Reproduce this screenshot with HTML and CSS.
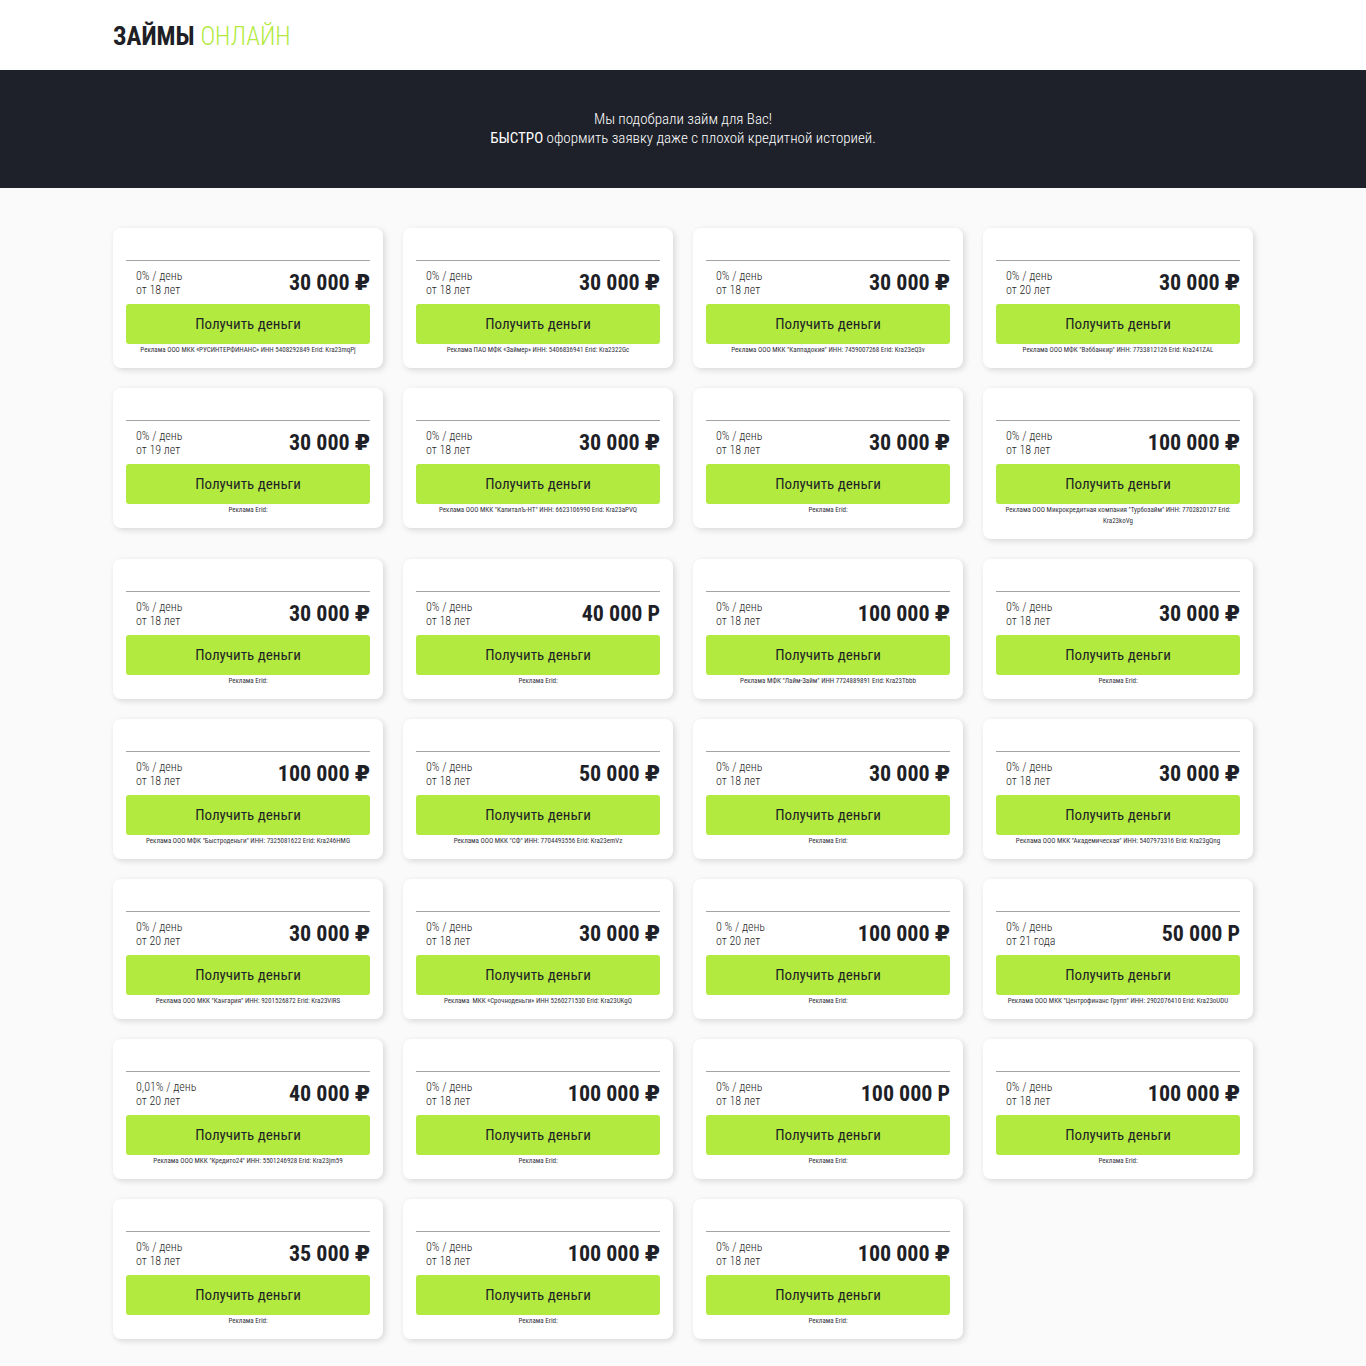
FILE: index.html
```html
<!DOCTYPE html>
<html lang="ru">
	<head>
		<meta charset="utf-8">
		<meta name="viewport" content="width=device-width, initial-scale=1.0">
		<title>Займы онлайн</title>
		<link rel="stylesheet" href="styles.css">
	</head>
	<body>
		<header class="header">
			<div class="container">
				<a href="/" class="logo"><b>ЗАЙМЫ</b> <span>ОНЛАЙН</span></a>
			</div>
		</header>
		<section class="banner">
			<p>Мы подобрали займ для Вас!<br><b>БЫСТРО</b> оформить заявку даже с плохой кредитной историей.</p>
		</section>
		<main class="container offers">
			<div class="card">
				<div class="card-logo"></div>
				<div class="card-info"><p>0% / день<br>от 18 лет</p><strong>30 000 <i>₽</i></strong></div>
				<a href="#" class="card-button">Получить деньги</a>
				<p class="card-ad">Реклама ООО МКК «РУСИНТЕРФИНАНС» ИНН 5408292849 Erid: Kra23mqPj</p>
			</div>
			<div class="card">
				<div class="card-logo"></div>
				<div class="card-info"><p>0% / день<br>от 18 лет</p><strong>30 000 <i>₽</i></strong></div>
				<a href="#" class="card-button">Получить деньги</a>
				<p class="card-ad">Реклама ПАО МФК «Займер» ИНН: 5406836941 Erid: Kra2322Gc</p>
			</div>
			<div class="card">
				<div class="card-logo"></div>
				<div class="card-info"><p>0% / день<br>от 18 лет</p><strong>30 000 <i>₽</i></strong></div>
				<a href="#" class="card-button">Получить деньги</a>
				<p class="card-ad">Реклама ООО МКК "Каппадокия" ИНН: 7459007268 Erid: Kra23eQ3v</p>
			</div>
			<div class="card">
				<div class="card-logo"></div>
				<div class="card-info"><p>0% / день<br>от 20 лет</p><strong>30 000 <i>₽</i></strong></div>
				<a href="#" class="card-button">Получить деньги</a>
				<p class="card-ad">Реклама ООО МФК "Вэббанкир" ИНН: 7733812126 Erid: Kra241ZAL</p>
			</div>

			<div class="card">
				<div class="card-logo"></div>
				<div class="card-info"><p>0% / день<br>от 19 лет</p><strong>30 000 <i>₽</i></strong></div>
				<a href="#" class="card-button">Получить деньги</a>
				<p class="card-ad">Реклама Erid:</p>
			</div>
			<div class="card">
				<div class="card-logo"></div>
				<div class="card-info"><p>0% / день<br>от 18 лет</p><strong>30 000 <i>₽</i></strong></div>
				<a href="#" class="card-button">Получить деньги</a>
				<p class="card-ad">Реклама ООО МКК "КапиталЪ-НТ" ИНН: 6623106990 Erid: Kra23aPVQ</p>
			</div>
			<div class="card">
				<div class="card-logo"></div>
				<div class="card-info"><p>0% / день<br>от 18 лет</p><strong>30 000 <i>₽</i></strong></div>
				<a href="#" class="card-button">Получить деньги</a>
				<p class="card-ad">Реклама Erid:</p>
			</div>
			<div class="card">
				<div class="card-logo"></div>
				<div class="card-info"><p>0% / день<br>от 18 лет</p><strong>100 000 <i>₽</i></strong></div>
				<a href="#" class="card-button">Получить деньги</a>
				<p class="card-ad">Реклама ООО Микрокредитная компания "Турбозайм" ИНН: 7702820127 Erid: Kra23koVg</p>
			</div>

			<div class="card">
				<div class="card-logo"></div>
				<div class="card-info"><p>0% / день<br>от 18 лет</p><strong>30 000 <i>₽</i></strong></div>
				<a href="#" class="card-button">Получить деньги</a>
				<p class="card-ad">Реклама Erid:</p>
			</div>
			<div class="card">
				<div class="card-logo"></div>
				<div class="card-info"><p>0% / день<br>от 18 лет</p><strong>40 000 Р</strong></div>
				<a href="#" class="card-button">Получить деньги</a>
				<p class="card-ad">Реклама Erid:</p>
			</div>
			<div class="card">
				<div class="card-logo"></div>
				<div class="card-info"><p>0% / день<br>от 18 лет</p><strong>100 000 <i>₽</i></strong></div>
				<a href="#" class="card-button">Получить деньги</a>
				<p class="card-ad">Реклама МФК "Лайм-Займ" ИНН 7724889891 Erid: Kra23Tbbb</p>
			</div>
			<div class="card">
				<div class="card-logo"></div>
				<div class="card-info"><p>0% / день<br>от 18 лет</p><strong>30 000 <i>₽</i></strong></div>
				<a href="#" class="card-button">Получить деньги</a>
				<p class="card-ad">Реклама Erid:</p>
			</div>

			<div class="card">
				<div class="card-logo"></div>
				<div class="card-info"><p>0% / день<br>от 18 лет</p><strong>100 000 <i>₽</i></strong></div>
				<a href="#" class="card-button">Получить деньги</a>
				<p class="card-ad">Реклама ООО МФК "Быстроденьги" ИНН: 7325081622 Erid: Kra246HMG</p>
			</div>
			<div class="card">
				<div class="card-logo"></div>
				<div class="card-info"><p>0% / день<br>от 18 лет</p><strong>50 000 <i>₽</i></strong></div>
				<a href="#" class="card-button">Получить деньги</a>
				<p class="card-ad">Реклама ООО МКК "СФ" ИНН: 7704493556 Erid: Kra23emVz</p>
			</div>
			<div class="card">
				<div class="card-logo"></div>
				<div class="card-info"><p>0% / день<br>от 18 лет</p><strong>30 000 <i>₽</i></strong></div>
				<a href="#" class="card-button">Получить деньги</a>
				<p class="card-ad">Реклама Erid:</p>
			</div>
			<div class="card">
				<div class="card-logo"></div>
				<div class="card-info"><p>0% / день<br>от 18 лет</p><strong>30 000 <i>₽</i></strong></div>
				<a href="#" class="card-button">Получить деньги</a>
				<p class="card-ad">Реклама ООО МКК "Академическая" ИНН: 5407973316 Erid: Kra23gQng</p>
			</div>

			<div class="card">
				<div class="card-logo"></div>
				<div class="card-info"><p>0% / день<br>от 20 лет</p><strong>30 000 <i>₽</i></strong></div>
				<a href="#" class="card-button">Получить деньги</a>
				<p class="card-ad">Реклама ООО МКК "Кангария" ИНН: 9201526872 Erid: Kra23ViRS</p>
			</div>
			<div class="card">
				<div class="card-logo"></div>
				<div class="card-info"><p>0% / день<br>от 18 лет</p><strong>30 000 <i>₽</i></strong></div>
				<a href="#" class="card-button">Получить деньги</a>
				<p class="card-ad">Реклама &nbsp;МКК «Срочноденьги» ИНН 5260271530 Erid: Kra23UKgQ</p>
			</div>
			<div class="card">
				<div class="card-logo"></div>
				<div class="card-info"><p>0 % / день<br>от 20 лет</p><strong>100 000 <i>₽</i></strong></div>
				<a href="#" class="card-button">Получить деньги</a>
				<p class="card-ad">Реклама Erid:</p>
			</div>
			<div class="card">
				<div class="card-logo"></div>
				<div class="card-info"><p>0% / день<br>от 21 года</p><strong>50 000 Р</strong></div>
				<a href="#" class="card-button">Получить деньги</a>
				<p class="card-ad">Реклама ООО МКК "Центрофинанс Групп" ИНН: 2902076410 Erid: Kra23oUDU</p>
			</div>

			<div class="card">
				<div class="card-logo"></div>
				<div class="card-info"><p>0,01% / день<br>от 20 лет</p><strong>40 000 <i>₽</i></strong></div>
				<a href="#" class="card-button">Получить деньги</a>
				<p class="card-ad">Реклама ООО МКК "Кредито24" ИНН: 5501246928 Erid: Kra23jm59</p>
			</div>
			<div class="card">
				<div class="card-logo"></div>
				<div class="card-info"><p>0% / день<br>от 18 лет</p><strong>100 000 <i>₽</i></strong></div>
				<a href="#" class="card-button">Получить деньги</a>
				<p class="card-ad">Реклама Erid:</p>
			</div>
			<div class="card">
				<div class="card-logo"></div>
				<div class="card-info"><p>0% / день<br>от 18 лет</p><strong>100 000 Р</strong></div>
				<a href="#" class="card-button">Получить деньги</a>
				<p class="card-ad">Реклама Erid:</p>
			</div>
			<div class="card">
				<div class="card-logo"></div>
				<div class="card-info"><p>0% / день<br>от 18 лет</p><strong>100 000 <i>₽</i></strong></div>
				<a href="#" class="card-button">Получить деньги</a>
				<p class="card-ad">Реклама Erid:</p>
			</div>

			<div class="card">
				<div class="card-logo"></div>
				<div class="card-info"><p>0% / день<br>от 18 лет</p><strong>35 000 <i>₽</i></strong></div>
				<a href="#" class="card-button">Получить деньги</a>
				<p class="card-ad">Реклама Erid:</p>
			</div>
			<div class="card">
				<div class="card-logo"></div>
				<div class="card-info"><p>0% / день<br>от 18 лет</p><strong>100 000 <i>₽</i></strong></div>
				<a href="#" class="card-button">Получить деньги</a>
				<p class="card-ad">Реклама Erid:</p>
			</div>
			<div class="card">
				<div class="card-logo"></div>
				<div class="card-info"><p>0% / день<br>от 18 лет</p><strong>100 000 <i>₽</i></strong></div>
				<a href="#" class="card-button">Получить деньги</a>
				<p class="card-ad">Реклама Erid:</p>
			</div>
		</main>
	</body>
</html>
```
FILE: styles.css
```css
* {
	box-sizing: border-box;
}
body {
	margin: 0;
	background: #fafafa;
	color: #1f1f27;
	font-family: "Roboto Condensed", "Liberation Sans Narrow", "Roboto", sans-serif;
	font-size: 15px;
}
p {
	margin: 0;
}
a {
	color: inherit;
	text-decoration: none;
}

.container {
	max-width: 1140px;
	margin: 0 auto;
}
.header {
	padding: 20px 0 16px;
	background: #fff;
}
.logo {
	display: block;
	font-size: 25px;
	line-height: 34px;
}
.logo span {
	color: #b2ea40;
	font-weight: 300;
}
.banner {
	padding: 40px 20px;
	background: #1e2129;
	color: #fff;
	font-weight: 300;
	line-height: 19px;
	text-align: center;
}

.offers {
	display: grid;
	grid-template-columns: repeat(4, 1fr);
	align-items: start;
	gap: 20px;
	padding: 40px 0;
}
.card {
	padding: 13px 13px 12px;
	border-radius: 8px;
	background: #fff;
	box-shadow: 2px 2px 6px rgba(0, 0, 0, .14);
}
.card-logo {
	height: 20px;
	border-bottom: 1px solid #a5a5a5;
}
.card-info {
	display: flex;
	align-items: center;
	justify-content: space-between;
	height: 43px;
	padding-left: 10px;
}
.card-info p {
	font-size: 12px;
	font-weight: 300;
	line-height: 14px;
}
.card-info strong {
	font-size: 22px;
	line-height: 26px;
	white-space: nowrap;
}
.card-info i {
	font-family: "DejaVu Sans", sans-serif;
	font-style: normal;
	line-height: 1;
}
.card-button {
	display: block;
	border-radius: 3px;
	background: #b2ea40;
	font-size: 15px;
	line-height: 40px;
	text-align: center;
}
.card-ad {
	padding-top: 1px;
	color: #33333b;
	font-size: 7px;
	line-height: 11px;
	text-align: center;
}

@media (max-width: 1140px) {
	.offers {
		grid-template-columns: repeat(auto-fill, minmax(250px, 1fr));
		padding: 40px 20px;
	}
	.header {
		padding-left: 20px;
	}
}
```
